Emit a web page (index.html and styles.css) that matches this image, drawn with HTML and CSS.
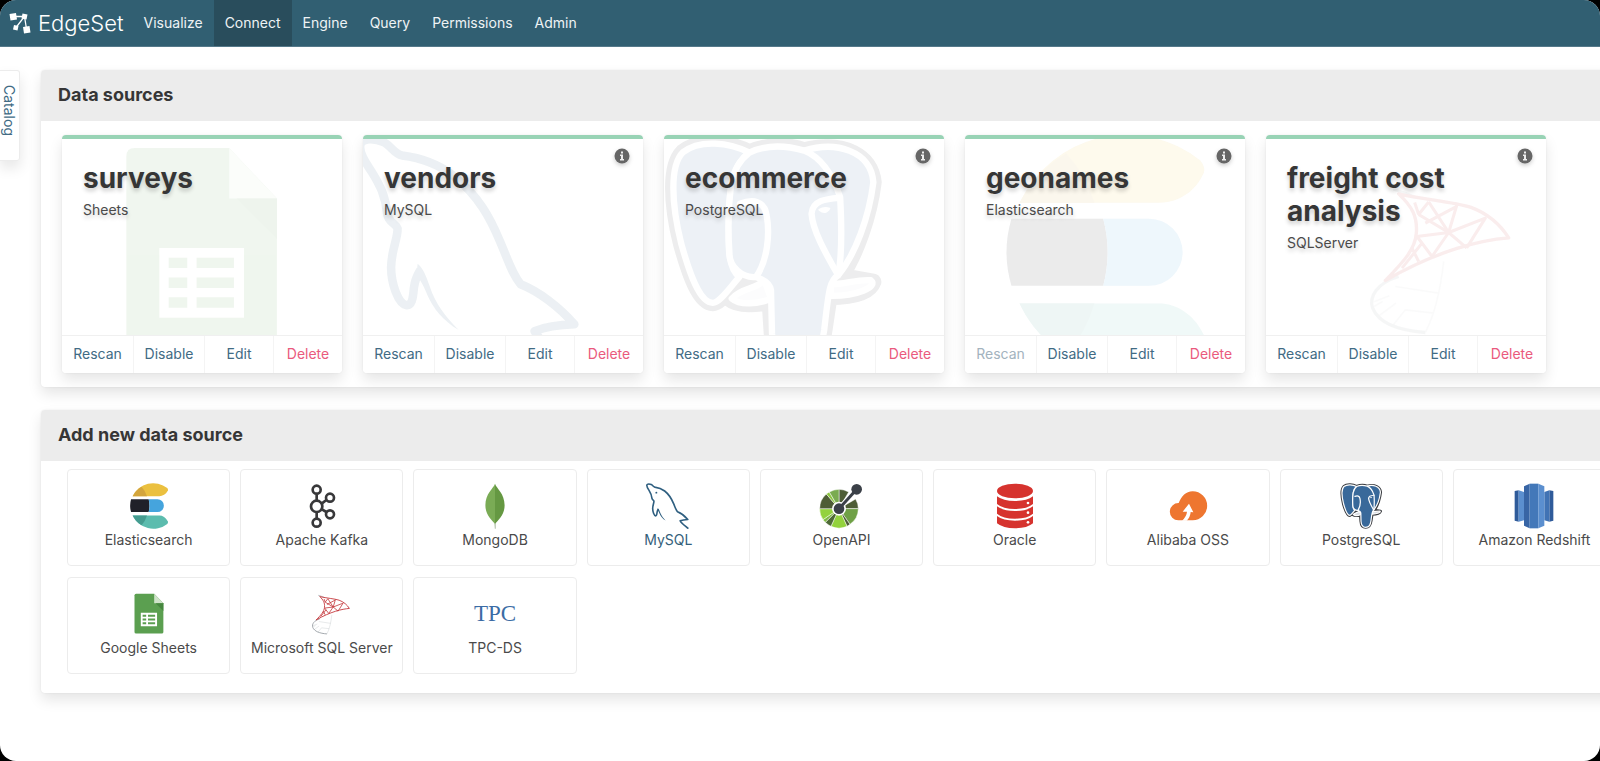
FILE: index.html
```html
<!DOCTYPE html>
<html lang="en">
<head>
<meta charset="utf-8">
<title>EdgeSet – Connect</title>
<meta name="viewport" content="width=device-width, initial-scale=1">
<link rel="stylesheet" href="styles.css">
</head>
<body>
<svg class="sprite" aria-hidden="true">
  <symbol id="elastic" viewBox="267 249 116 136">
    <path fill="#ebc03f" d="M276.6 288A67 67 0 0 1 379 264Q383 269 380 273C375 283 365 288 356 288Z"/>
    <path fill="#d3a53c" d="M276.6 288A67 67 0 0 1 303 260Q314 272 319 288Z"/>
    <path fill="#202129" d="M272 297A67 67 0 0 0 272 335H324Q329 316 324 297Z"/>
    <path fill="#45a4dd" d="M324 297H350A19 19 0 0 1 350 335H324Q329 316 324 297Z"/>
    <path fill="#5cbcae" d="M276.6 345A67 67 0 0 0 379 370Q383 365 380 361C375 351 365 345 356 345Z"/>
    <path fill="#459c90" d="M276.6 345A67 67 0 0 0 303 374Q314 362 319 345Z"/>
  </symbol>
  <symbol id="kafka" viewBox="803 248 82 138">
    <g fill="none" stroke="#38383a" stroke-width="8">
      <path d="M828 282V300M828 336V354M844 309L857 299M844 327L857 335"/>
      <circle cx="828" cy="268" r="12"/><circle cx="828" cy="318" r="17"/><circle cx="828" cy="367" r="12"/>
      <circle cx="868" cy="292" r="12"/><circle cx="868" cy="342" r="12"/>
    </g>
  </symbol>
  <symbol id="mongo" viewBox="256 70 60 134">
    <path fill="#a9b8a0" d="M284 184H288L288 203H285.500Z"/>
    <path fill="#7aab55" d="M286 72C281 87 258 100 258 135C258 162 276 178 286 189Z"/>
    <path fill="#659842" d="M286 72C291 87 314 100 314 135C314 162 296 178 286 189Z"/>
  </symbol>
  <symbol id="mysql" viewBox="40 42 682 706">
    <g fill="none" stroke="#2f5f80" stroke-width="25" stroke-linejoin="round">
      <path d="M232 442Q216 468 213 495C210 530 206 546 192 546C166 542 146 480 146 435C146 385 166 350 165 320C160 305 137 302 134 275C130 225 112 190 90 155C70 125 50 95 56 72C64 52 100 55 124 66C145 76 155 100 178 105C235 112 285 130 330 165C405 225 440 295 465 355C495 425 503 455 527 484C580 505 640 550 685 602C650 603 600 609 568 622C590 662 640 695 694 742"/>
    </g>
    <path fill="#2f5f80" d="M224 424C244 440 252 470 266 508C288 560 318 590 344 618C300 592 270 556 252 514C242 492 236 474 220 460Z"/>
    <circle cx="202" cy="190" r="15" fill="#2f5f80"/>
  </symbol>
  <symbol id="openapi" viewBox="208 68 130 138">
    <g stroke="#fff" stroke-width="1.500">
      <path fill="#4e5d36" d="M267 145V87A58 58 0 0 1 296 95Z"/>
      <path fill="#4e5d36" d="M267 145L317 116A58 58 0 0 1 325 145Z"/>
      <path fill="#6fa046" d="M267 145H325A58 58 0 0 1 300 192Z"/>
      <path fill="#4e5d36" d="M267 145L300 192A58 58 0 0 1 291 198Z"/>
      <path fill="#93d23d" d="M267 145L291 198A58 58 0 0 1 243 198Z"/>
      <path fill="#4e6a36" d="M267 145L243 198A58 58 0 0 1 226 186Z"/>
      <path fill="#7fb944" d="M267 145L226 186A58 58 0 0 1 219 178Z"/>
      <path fill="#93d23d" d="M267 145L219 178A58 58 0 0 1 209 145Z"/>
      <path fill="#4e5d36" d="M267 145H209A58 58 0 0 1 229 101Z"/>
      <path fill="#8cc63f" d="M267 145L229 101A58 58 0 0 1 238 95Z"/>
      <path fill="#7aab50" d="M267 145L238 95A58 58 0 0 1 267 87Z"/>
    </g>
    <circle cx="267" cy="145" r="21" fill="#fff"/>
    <path d="M267 145L320 87" stroke="#fff" stroke-width="15"/>
    <path d="M267 145L320 87" stroke="#3b4048" stroke-width="9"/>
    <circle cx="267" cy="145" r="16" fill="#3b4048"/><circle cx="320" cy="87" r="16" fill="#3b4048"/>
  </symbol>
  <symbol id="oracle" viewBox="738 68 112 138">
    <g fill="#d6332e">
      <ellipse cx="794" cy="92" rx="54" ry="22"/>
      <path d="M740 108Q758 122 794 122T848 108V131Q830 146 794 146T740 131Z"/>
      <path d="M740 138Q758 152 794 152T848 138V160Q830 175 794 175T740 160Z"/>
      <path d="M740 167Q758 181 794 181T848 167V189Q830 204 794 204T740 189Z"/>
    </g>
    <g fill="#fff"><circle cx="833" cy="128" r="4"/><circle cx="833" cy="157" r="4"/><circle cx="833" cy="186" r="4"/></g>
  </symbol>
  <symbol id="alibaba" viewBox="209 68 112 138">
    <path fill="#ee7630" d="M237 128C246 108 258 93 279 93A43 43 0 0 1 279 180H236A26 26 0 0 1 237 128Z"/>
    <path fill="#fff" d="M268 130L281 156L273 155Q272 170 261 181H247Q261 168 262 154L249 154Z"/>
  </symbol>
  <symbol id="postgres" viewBox="34 40 668 722">
    <g stroke="#3a3c40" stroke-width="50" fill="#3a3c40" stroke-linejoin="round">
      <path d="M300 96C240 65 150 55 100 95C60 135 65 250 95 370C120 460 150 548 190 548C210 548 235 510 270 475L240 535C270 560 330 550 362 545L368 640C372 700 385 735 440 735C500 735 515 700 525 630L540 530C600 530 660 520 672 485L575 468C620 400 660 290 673 185C665 110 590 60 465 90C410 70 350 75 300 96Z"/>
    </g>
    <g stroke="#fff" stroke-width="19" fill="#39699a" stroke-linejoin="round" stroke-linecap="round">
      <path d="M545 492C585 492 630 476 665 480C690 500 620 528 545 527Z" fill="#d9dde3"/>
      <path d="M345 480C315 510 280 500 247 535C270 555 325 553 365 535Z" fill="#d9dde3"/>
      <path d="M300 96C240 65 150 55 100 95C60 135 65 250 95 370C120 460 150 548 190 548C210 548 235 510 270 470C230 440 238 360 238 290C240 200 250 130 300 96Z"/>
      <path d="M465 90C560 60 665 90 673 185C660 290 620 400 567 465L480 300Z"/>
      <path d="M300 96C350 72 410 74 465 90C515 110 550 160 573 230C578 320 580 400 567 465C540 480 538 520 525 630C515 700 500 735 440 735C385 735 372 700 368 640L365 510C362 485 335 475 320 470C280 475 240 440 240 400C236 340 236 260 245 190C255 145 270 120 300 96Z"/>
      <path d="M272 250C310 235 345 240 352 285C362 340 355 420 320 470" fill="none"/>
      <path d="M570 232C530 235 490 240 487 280C490 330 530 400 563 458" fill="none"/>
      <path d="M510 268Q525 258 541 264Q530 284 510 268Z" fill="#fff" stroke-width="5"/>
    </g>
  </symbol>
  <symbol id="redshift" viewBox="1243 68 120 138">
    <path fill="#2f5b9a" d="M1245 92L1257 90V184L1245 181ZM1361 92L1349 90V184L1361 181Z"/>
    <path fill="#5b8fcf" d="M1257 90L1273 95V180L1257 184Z"/>
    <path fill="#4173b4" d="M1349 90L1334 95V180L1349 184Z"/>
    <path fill="#3865a5" d="M1273 78L1290 70V204L1273 196Z"/>
    <path fill="#4378b9" d="M1290 70H1316V204H1290Z"/>
    <path fill="#5b8fcf" d="M1316 70L1334 78V196L1316 204Z"/>
  </symbol>
  <symbol id="sheets" viewBox="130 48 714 714">
    <path fill="#5b9f50" d="M287 90H568L710 240V683Q710 708 685 708H287Q262 708 262 683V115Q262 90 287 90Z"/>
    <path fill="#cfe3c9" d="M568 90L710 240H568Z"/>
    <path fill="#46873f" d="M590 240H710V360Z"/>
    <path fill="#fff" d="M360 387H612V595H360Z"/>
    <path fill="#5b9f50" d="M388 416H443V447H388ZM471 416H582V447H471ZM388 475H443V506H388ZM471 475H582V506H471ZM388 534H443V565H388ZM471 534H582V565H471Z"/>
  </symbol>
  <symbol id="sqlserver" viewBox="75 160 780 512">
    <g fill="none" stroke="#9aa0a6">
      <path d="M440 470C375 490 350 530 362 565C380 610 440 632 520 638" stroke-width="10"/>
      <path d="M366 546L412 528M378 590L432 550M420 620L460 570M366 560L392 545M520 638Q560 560 575 425M430 500L560 520M460 570L545 580" stroke-width="5" opacity=".5"/>
      <path d="M424 208Q460 218 490 232" stroke-width="8"/>
    </g>
    <g fill="none" stroke="#c5383c" stroke-width="10" stroke-linejoin="round">
      <path d="M440 222C520 240 600 245 655 262C710 282 745 315 770 354C690 360 560 390 400 482C450 430 490 390 493 340C497 290 480 260 440 222Z"/>
      <path d="M500 284L590 338L644 384M500 284L530 246M500 284L488 248M530 246L590 338M615 254L590 338L540 410M590 338L700 295L644 384M590 338L495 350M495 350L540 410M510 370L450 445M480 385L500 425M520 310L610 262" stroke-width="9"/>
    </g>
  </symbol>
  <symbol id="info" viewBox="0 0 16 16">
    <circle cx="8" cy="8" r="7.500" fill="#666"/>
    <path fill="#eee" d="M7 3.500H9V5.500H7ZM6 6.500H9V11H10V12.500H6V11H7V8H6Z"/>
  </symbol>
</svg>

<header class="topbar">
  <a class="brand" href="#">
    <svg class="brand-mark" viewBox="0 0 22 22" aria-hidden="true">
      <path d="M4 4.500L15.500 4.500L7 15.500M15.500 4.500L17.500 17" fill="none" stroke="#fff" stroke-width="1.300"/>
      <path fill="#fff" d="M0.500 2L7 1L8 7.500L1.500 8.500ZM13.500 1.500L18.500 2.500L17.500 7.500L12.500 6.500ZM5 13L9.500 14L8.500 18.500L4 17.500ZM14 15L20.500 14L21.500 20.500L15 21.500Z"/>
    </svg>
    <span>EdgeSet</span>
  </a>
  <nav class="nav">
    <a href="#">Visualize</a>
    <a href="#" class="active" aria-current="page">Connect</a>
    <a href="#">Engine</a>
    <a href="#">Query</a>
    <a href="#">Permissions</a>
    <a href="#">Admin</a>
  </nav>
</header>

<div class="layout">
  <button class="catalog" type="button">Catalog</button>
  <main class="main">
    <section class="panel">
      <h2 class="panel-title">Data sources</h2>
      <div class="cards">
        <article class="card">
          <svg class="art" aria-hidden="true"><use href="#sheets"/></svg>
          <div class="card-body"><h3>surveys</h3><p>Sheets</p></div>
          <footer class="actions"><button type="button">Rescan</button><button type="button">Disable</button><button type="button">Edit</button><button type="button" class="danger">Delete</button></footer>
        </article>
        <article class="card">
          <svg class="art art-left" aria-hidden="true"><use href="#mysql"/></svg>
          <button class="info" type="button" aria-label="Info"><svg aria-hidden="true"><use href="#info"/></svg></button>
          <div class="card-body"><h3>vendors</h3><p>MySQL</p></div>
          <footer class="actions"><button type="button">Rescan</button><button type="button">Disable</button><button type="button">Edit</button><button type="button" class="danger">Delete</button></footer>
        </article>
        <article class="card">
          <svg class="art art-left" aria-hidden="true"><use href="#postgres"/></svg>
          <button class="info" type="button" aria-label="Info"><svg aria-hidden="true"><use href="#info"/></svg></button>
          <div class="card-body"><h3>ecommerce</h3><p>PostgreSQL</p></div>
          <footer class="actions"><button type="button">Rescan</button><button type="button">Disable</button><button type="button">Edit</button><button type="button" class="danger">Delete</button></footer>
        </article>
        <article class="card">
          <svg class="art" aria-hidden="true"><use href="#elastic"/></svg>
          <button class="info" type="button" aria-label="Info"><svg aria-hidden="true"><use href="#info"/></svg></button>
          <div class="card-body"><h3>geonames</h3><p>Elasticsearch</p></div>
          <footer class="actions"><button type="button" disabled>Rescan</button><button type="button">Disable</button><button type="button">Edit</button><button type="button" class="danger">Delete</button></footer>
        </article>
        <article class="card">
          <svg class="art art-wide" aria-hidden="true"><use href="#sqlserver"/></svg>
          <button class="info" type="button" aria-label="Info"><svg aria-hidden="true"><use href="#info"/></svg></button>
          <div class="card-body"><h3>freight cost analysis</h3><p>SQLServer</p></div>
          <footer class="actions"><button type="button">Rescan</button><button type="button">Disable</button><button type="button">Edit</button><button type="button" class="danger">Delete</button></footer>
        </article>
      </div>
    </section>

    <section class="panel">
      <h2 class="panel-title">Add new data source</h2>
      <div class="tiles">
        <button class="tile" type="button"><svg aria-hidden="true"><use href="#elastic"/></svg><span>Elasticsearch</span></button>
        <button class="tile" type="button"><svg aria-hidden="true"><use href="#kafka"/></svg><span>Apache Kafka</span></button>
        <button class="tile" type="button"><svg aria-hidden="true"><use href="#mongo"/></svg><span>MongoDB</span></button>
        <button class="tile highlighted" type="button"><svg aria-hidden="true"><use href="#mysql"/></svg><span>MySQL</span></button>
        <button class="tile" type="button"><svg aria-hidden="true"><use href="#openapi"/></svg><span>OpenAPI</span></button>
        <button class="tile" type="button"><svg aria-hidden="true"><use href="#oracle"/></svg><span>Oracle</span></button>
        <button class="tile" type="button"><svg aria-hidden="true"><use href="#alibaba"/></svg><span>Alibaba OSS</span></button>
        <button class="tile" type="button"><svg aria-hidden="true"><use href="#postgres"/></svg><span>PostgreSQL</span></button>
        <button class="tile" type="button"><svg aria-hidden="true"><use href="#redshift"/></svg><span>Amazon Redshift</span></button>
        <button class="tile" type="button"><svg aria-hidden="true"><use href="#sheets"/></svg><span>Google Sheets</span></button>
        <button class="tile" type="button"><svg class="wide" aria-hidden="true"><use href="#sqlserver"/></svg><span>Microsoft SQL Server</span></button>
        <button class="tile" type="button"><span class="tpc" aria-hidden="true">TPC</span><span>TPC-DS</span></button>
      </div>
    </section>
  </main>
</div>
</body>
</html>
```

FILE: styles.css
```css
* { box-sizing: border-box; }

html {
  overflow: hidden auto;
  background: #000;
}

body {
  margin: 0;
  min-height: 100vh;
  overflow: hidden;
  border-radius: 16px;
  background: #fff;
  color: #4a4a4a;
  font: 14px/20px Inter, "Liberation Sans", sans-serif;
}

button {
  margin: 0;
  padding: 0;
  border: 0;
  background: none;
  color: inherit;
  font: inherit;
  cursor: pointer;
}

.sprite { display: none; }

.topbar {
  display: flex;
  height: 47px;
  background: #315f72;
  border-bottom: 1px solid #55798a;
}

.brand {
  display: flex;
  align-items: center;
  gap: 7px;
  padding: 0 9px;
  color: #fff;
  font-size: 22px;
  font-weight: 300;
  text-decoration: none;
}

.brand-mark { width: 22px; height: 22px; }

.nav { display: flex; }

.nav a {
  display: flex;
  align-items: center;
  padding: 0 11px;
  color: #eef3f5;
  text-decoration: none;
}

.nav .active { background: #294d5c; }

.layout {
  display: flex;
  align-items: flex-start;
  padding-top: 23px;
}

.catalog {
  flex: none;
  width: 20px;
  height: 91px;
  margin-right: 21px;
  padding: 0 0 10px;
  border: 1px solid #ececec;
  border-left: 0;
  border-radius: 0 3px 3px 0;
  box-shadow: 0 7px 14px rgba(0, 0, 0, .1);
  color: #416b84;
  line-height: 17px;
  writing-mode: vertical-rl;
}

.main {
  flex: 1;
  min-width: 0;
  margin-right: -42px;
}

.panel {
  margin-bottom: 23px;
  border-radius: 4px;
  background: #fff;
  box-shadow: 0 7px 14px rgba(0, 0, 0, .1), 0 0 2px rgba(0, 0, 0, .08);
}

.panel-title {
  margin: 0;
  padding: 13px 17px 14px;
  border-radius: 4px 4px 0 0;
  background: #ececec;
  color: #363636;
  font-size: 18px;
  font-weight: 700;
  line-height: 24px;
}

.cards {
  display: flex;
  flex-wrap: wrap;
  gap: 21px;
  padding: 14px 21px;
}

.card {
  position: relative;
  display: flex;
  flex-direction: column;
  width: 280px;
  min-height: 238px;
  overflow: hidden;
  border-top: 4px solid #98d3b5;
  border-radius: 4px;
  box-shadow: 0 7px 14px rgba(0, 0, 0, .1), 0 0 2px rgba(0, 0, 0, .08);
}

.art {
  position: absolute;
  top: -5px;
  left: 20px;
  width: 240px;
  height: 240px;
  opacity: .09;
}

.art-left { left: -12px; }

.art-wide {
  top: 34px;
  left: 11px;
  width: 260px;
  height: 171px;
}

.info {
  position: absolute;
  z-index: 1;
  top: 9px;
  right: 13px;
  width: 16px;
  height: 16px;
  filter: drop-shadow(0 2px 2px rgba(0, 0, 0, .2));
}

.info svg {
  display: block;
  width: 16px;
  height: 16px;
}

.card-body {
  position: relative;
  flex: 1;
  padding: 23px 21px 0;
  text-shadow: 0 3px 4px rgba(0, 0, 0, .2);
}

.card h3 {
  margin: 0;
  color: #363636;
  font-size: 28px;
  font-weight: 700;
  line-height: 33px;
}

.card p { margin: 5px 0 0; }

.actions {
  position: relative;
  display: grid;
  grid-template-columns: 72fr 71fr 69fr 68fr;
  height: 38px;
  border-top: 1px solid #f0f0f0;
  background: #fff;
}

.actions button {
  padding-bottom: 2px;
  border-right: 1px solid #f4f4f4;
  color: #416b84;
}

.actions button:last-child { border-right: 0; }
.actions button:disabled { color: #a3b3be; }
.actions .danger { color: #ea5a7d; }

.tiles {
  display: grid;
  grid-template-columns: repeat(auto-fill, minmax(160px, 1fr));
  gap: 11px 10px;
  padding: 8px 26px 19px;
}

.tile {
  display: flex;
  flex-direction: column;
  align-items: center;
  height: 97px;
  padding-top: 13px;
  border: 1px solid #ececec;
  border-radius: 4px;
  white-space: nowrap;
}

.tile svg {
  width: 46px;
  height: 46px;
  margin-bottom: 1px;
}

.tile .wide { width: 70px; }
.highlighted { color: #34607a; }

.tpc {
  height: 46px;
  margin-bottom: 1px;
  color: #3b6ca5;
  font: 23px/46px "Liberation Serif", serif;
}
```
